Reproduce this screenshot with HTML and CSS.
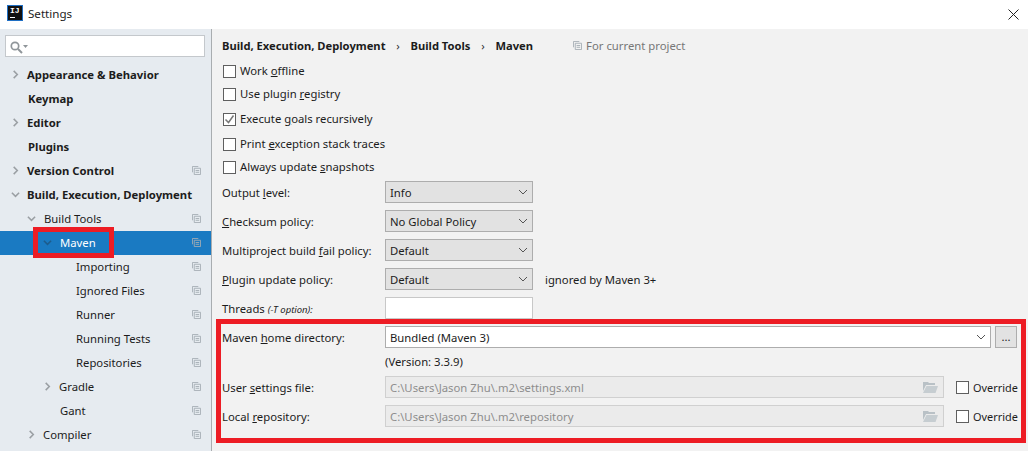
FILE: index.html
```html
<!DOCTYPE html>
<html lang="en">
<head>
  <meta charset="UTF-8">
  <meta name="viewport" content="width=device-width, initial-scale=1.0">
  <title>Settings</title>
  <link rel="stylesheet" href="styles.css">
</head>
<body>
  <svg class="defs" width="0" height="0">
    <symbol id="right" viewBox="0 0 10 10"><path d="M3 1l4 4-4 4" fill="none" stroke="#9a9fa3" stroke-width="1.7"/></symbol>
    <symbol id="down" viewBox="0 0 10 10"><path d="M1 3l4 4 4-4" fill="none" stroke="#9a9fa3" stroke-width="1.7"/></symbol>
    <symbol id="down-dark" viewBox="0 0 10 10"><path d="M1 3l4 4 4-4" fill="none" stroke="#1d5c8c" stroke-width="1.7"/></symbol>
    <symbol id="copy" viewBox="0 0 10 10"><path d="M.5 7V.5H7M2.500 2.500h7v7h-7zM4 5h4M4 7h4" fill="none" stroke="#a4adb3"/></symbol>
    <symbol id="arrow" viewBox="0 0 10 6"><path d="M1 1l4 4 4-4" fill="none" stroke="#555" stroke-width="1"/></symbol>
    <symbol id="folder" viewBox="0 0 15 12"><path d="M0 1h5l1 1h6v2H3L0 10z" fill="#b9c1c6"/><path d="M3.500 5H15l-2.500 7H0z" fill="#c6cdd1"/></symbol>
  </svg>

  <header class="titlebar">
    <span class="applogo"><span class="applogo-text">IJ</span><span class="applogo-bar"></span></span>
    <span class="titlebar-text">Settings</span>
    <svg class="close" width="11" height="11" viewBox="0 0 11 11"><path d="M.5.5l10 10M10.500.5l-10 10" stroke="#222" stroke-width="1"/></svg>
  </header>

  <div class="window">
    <aside class="sidebar">
      <div class="search">
        <svg width="19" height="13" viewBox="0 0 19 13">
          <circle cx="5" cy="5" r="3.700" fill="none" stroke="#8f9599" stroke-width="1.700"/>
          <path d="M8 8l4 4" stroke="#8f9599" stroke-width="2"/>
          <path d="M13 4h5l-2.500 3z" fill="#8f9599"/>
        </svg>
      </div>
      <ul class="tree">
        <li class="node bold"><svg class="twisty lvl1"><use href="#right"/></svg>Appearance &amp; Behavior</li>
        <li class="node bold leaf-top">Keymap</li>
        <li class="node bold"><svg class="twisty lvl1"><use href="#right"/></svg>Editor</li>
        <li class="node bold leaf-top">Plugins</li>
        <li class="node bold"><svg class="twisty lvl1"><use href="#right"/></svg>Version Control<svg class="copy"><use href="#copy"/></svg></li>
        <li class="node bold"><svg class="twisty lvl1"><use href="#down"/></svg>Build, Execution, Deployment</li>
        <li class="node"><svg class="twisty lvl2 open"><use href="#down"/></svg>Build Tools<svg class="copy"><use href="#copy"/></svg></li>
        <li class="node selected"><svg class="twisty lvl3 open"><use href="#down-dark"/></svg>Maven<svg class="copy"><use href="#copy"/></svg><span class="mark"></span></li>
        <li class="node sub">Importing<svg class="copy"><use href="#copy"/></svg></li>
        <li class="node sub">Ignored Files<svg class="copy"><use href="#copy"/></svg></li>
        <li class="node sub">Runner<svg class="copy"><use href="#copy"/></svg></li>
        <li class="node sub">Running Tests<svg class="copy"><use href="#copy"/></svg></li>
        <li class="node sub">Repositories<svg class="copy"><use href="#copy"/></svg></li>
        <li class="node"><svg class="twisty lvl3"><use href="#right"/></svg>Gradle<svg class="copy"><use href="#copy"/></svg></li>
        <li class="node gant">Gant<svg class="copy"><use href="#copy"/></svg></li>
        <li class="node"><svg class="twisty lvl2"><use href="#right"/></svg>Compiler<svg class="copy"><use href="#copy"/></svg></li>
      </ul>
    </aside>

    <main class="content">
      <div class="crumbs">
        <b>Build, Execution, Deployment</b><span class="sep">›</span><b>Build Tools</b><span class="sep">›</span><b>Maven</b>
        <span class="scope"><svg class="scope-icon"><use href="#copy"/></svg>For current project</span>
      </div>

      <div class="checks">
        <label class="check"><span class="box"></span><span class="check-text">Work <u>o</u>ffline</span></label>
        <label class="check"><span class="box"></span><span class="check-text">Use plugin <u>r</u>egistry</span></label>
        <label class="check gap"><span class="box"><svg width="11" height="11" viewBox="0 0 11 11"><path d="M1.500 5.500l3 3 5-7" fill="none" stroke="#777" stroke-width="1.500"/></svg></span><span class="check-text">Execute <u>g</u>oals recursively</span></label>
        <label class="check gap"><span class="box"></span><span class="check-text">Print <u>e</u>xception stack traces</span></label>
        <label class="check"><span class="box"></span><span class="check-text">Always update <u>s</u>napshots</span></label>
      </div>

      <div class="form">
        <div class="row"><span class="label">Output <u>l</u>evel:</span><div class="select">Info<svg class="arrow"><use href="#arrow"/></svg></div></div>
        <div class="row"><span class="label"><u>C</u>hecksum policy:</span><div class="select">No Global Policy<svg class="arrow"><use href="#arrow"/></svg></div></div>
        <div class="row"><span class="label">Multiproject build <u>f</u>ail policy:</span><div class="select">Default<svg class="arrow"><use href="#arrow"/></svg></div></div>
        <div class="row"><span class="label"><u>P</u>lugin update policy:</span><div class="select">Default<svg class="arrow"><use href="#arrow"/></svg></div><span class="hint">ignored by Maven 3+</span></div>
        <div class="row"><span class="label">Threads <i class="small">(-T option):</i></span><div class="input"></div></div>
      </div>

      <section class="maven">
        <div class="row"><span class="label">Maven <u>h</u>ome directory:</span><div class="select wide">Bundled (Maven 3)<svg class="arrow"><use href="#arrow"/></svg></div><div class="more">...</div></div>
        <div class="version">(Version: 3.3.9)</div>
        <div class="row"><span class="label">User <u>s</u>ettings file:</span><div class="path">C:\Users\Jason Zhu\.m2\settings.xml<svg class="folder"><use href="#folder"/></svg></div><label class="check override"><span class="box"></span>Override</label></div>
        <div class="row"><span class="label">Local <u>r</u>epository:</span><div class="path">C:\Users\Jason Zhu\.m2\repository<svg class="folder"><use href="#folder"/></svg></div><label class="check override"><span class="box"></span>Override</label></div>
      </section>
    </main>
  </div>
</body>
</html>
```

FILE: styles.css
```css
body, ul {
  margin: 0;
  padding: 0;
}

body {
  width: 1028px;
  height: 451px;
  overflow: hidden;
  background-color: #f2f2f2;
  font-family: "Noto Sans", Arial, sans-serif;
  font-size: 11.3px;
  color: #1c1c1c;
}

.defs {
  position: absolute;
}

.titlebar {
  height: 29px;
  background-color: #fff;
  display: flex;
  align-items: center;
  padding-left: 7px;
}

.applogo {
  width: 16px;
  height: 16px;
  box-sizing: border-box;
  margin-bottom: 3px;
  background-color: #111;
  border: 1px solid #1f6fc4;
  color: #fff;
  font-family: "Liberation Mono", monospace;
  font-size: 8px;
  font-weight: bold;
  line-height: 9px;
  padding-left: 2px;
  position: relative;
}

.applogo-text {
  display: block;
}

.applogo-bar {
  position: absolute;
  left: 2px;
  bottom: 2px;
  width: 5px;
  height: 1px;
  background-color: #fff;
}

.titlebar-text {
  margin-left: 5px;
  margin-bottom: 2px;
  font-size: 11.6px;
}

.close {
  margin-left: auto;
  margin-right: 9px;
}

.window {
  display: flex;
  height: 422px;
}

.sidebar {
  width: 212px;
  flex: none;
  box-sizing: border-box;
  background-color: #e6ebf0;
  border-right: 1px solid #a9adb0;
  padding-top: 6px;
}

.search {
  width: 200px;
  height: 22px;
  box-sizing: border-box;
  margin-left: 5px;
  padding: 5px 0 0 4px;
  background-color: #fff;
  border: 1px solid #c4c8cc;
}

.search svg {
  display: block;
}

.tree {
  list-style: none;
  margin-top: 6px;
}

.node {
  height: 24px;
  line-height: 22px;
  padding-bottom: 1px;
  box-sizing: border-box;
  display: flex;
  align-items: center;
  position: relative;
  white-space: nowrap;
}

.bold {
  font-weight: bold;
}

.twisty {
  width: 9px;
  height: 9px;
  margin-right: 7px;
  flex: none;
}

.lvl1 {
  margin-left: 11px;
}

.lvl2 {
  margin-left: 27px;
}

.lvl3 {
  margin-left: 43px;
}

.twisty.open {
  margin-right: 8px;
}

.leaf-top {
  padding-left: 28px;
}

.sub {
  padding-left: 76px;
}

.gant {
  padding-left: 60px;
}

.copy {
  width: 9px;
  height: 9px;
  position: absolute;
  left: 192px;
  top: 7px;
}

.selected {
  background-color: #1a7ac2;
  color: #fff;
}

/* red annotation round the Maven node */
.mark {
  position: absolute;
  left: 33px;
  top: -4px;
  width: 81px;
  height: 31px;
  box-sizing: border-box;
  border: 5px solid #ed1c24;
}

.content {
  flex: 1;
  padding-left: 10px;
}

.crumbs {
  height: 31px;
  padding-top: 2px;
  box-sizing: border-box;
  display: flex;
  align-items: center;
  white-space: nowrap;
}

.crumbs b {
  font-size: 11.2px;
}

.sep {
  width: 25px;
  text-align: center;
  color: #333;
}

.scope {
  display: flex;
  align-items: center;
  margin-left: 40px;
  color: #777;
}

.scope-icon {
  width: 9px;
  height: 9px;
  margin-right: 4px;
}

.check {
  height: 23px;
  display: flex;
  align-items: center;
  white-space: nowrap;
}

.check-text {
  padding-bottom: 2px;
}

.gap {
  margin-top: 2px;
}

.box {
  width: 13px;
  height: 13px;
  box-sizing: border-box;
  flex: none;
  margin: 0 4px 0 1px;
  background-color: #fff;
  border: 1px solid #5f5f5f;
  display: flex;
  align-items: center;
  justify-content: center;
}

.form {
  margin-top: 2px;
}

.row {
  height: 22px;
  margin-bottom: 7px;
  display: flex;
  align-items: center;
  white-space: nowrap;
}

.label {
  width: 163px;
  flex: none;
}

.small {
  font-size: 9.5px;
}

.select, .input, .path {
  height: 22px;
  box-sizing: border-box;
  width: 148px;
  flex: none;
  line-height: 21px;
  padding-left: 4px;
  position: relative;
}

.select {
  background-color: #e2e2e2;
  border: 1px solid #adadad;
}

.input {
  background-color: #fff;
  border: 1px solid #c8c8c8;
}

.arrow {
  width: 10px;
  height: 6px;
  position: absolute;
  right: 4px;
  top: 7px;
}

.hint {
  margin-left: 12px;
}

.maven {
  width: 810px;
  height: 124px;
  box-sizing: border-box;
  margin: -7px 0 0 -6px;
  padding: 2px 0 0 1px;
  border: 5px solid #ed1c24;
}

.wide {
  width: 606px;
  background-color: #fff;
}

.more {
  width: 22px;
  height: 22px;
  box-sizing: border-box;
  margin-left: 4px;
  background-color: #e2e2e2;
  border: 1px solid #adadad;
  text-align: center;
  line-height: 20px;
}

.version {
  height: 28px;
  line-height: 28px;
  padding-left: 163px;
  margin-top: -7px;
}

.path {
  width: 559px;
  background-color: #ebebeb;
  border: 1px solid #d0d0d0;
  color: #8e8e8e;
}

.folder {
  width: 15px;
  height: 12px;
  position: absolute;
  right: 5px;
  top: 4px;
}

.override {
  margin-left: 11px;
  font-size: 10.9px;
}
```
